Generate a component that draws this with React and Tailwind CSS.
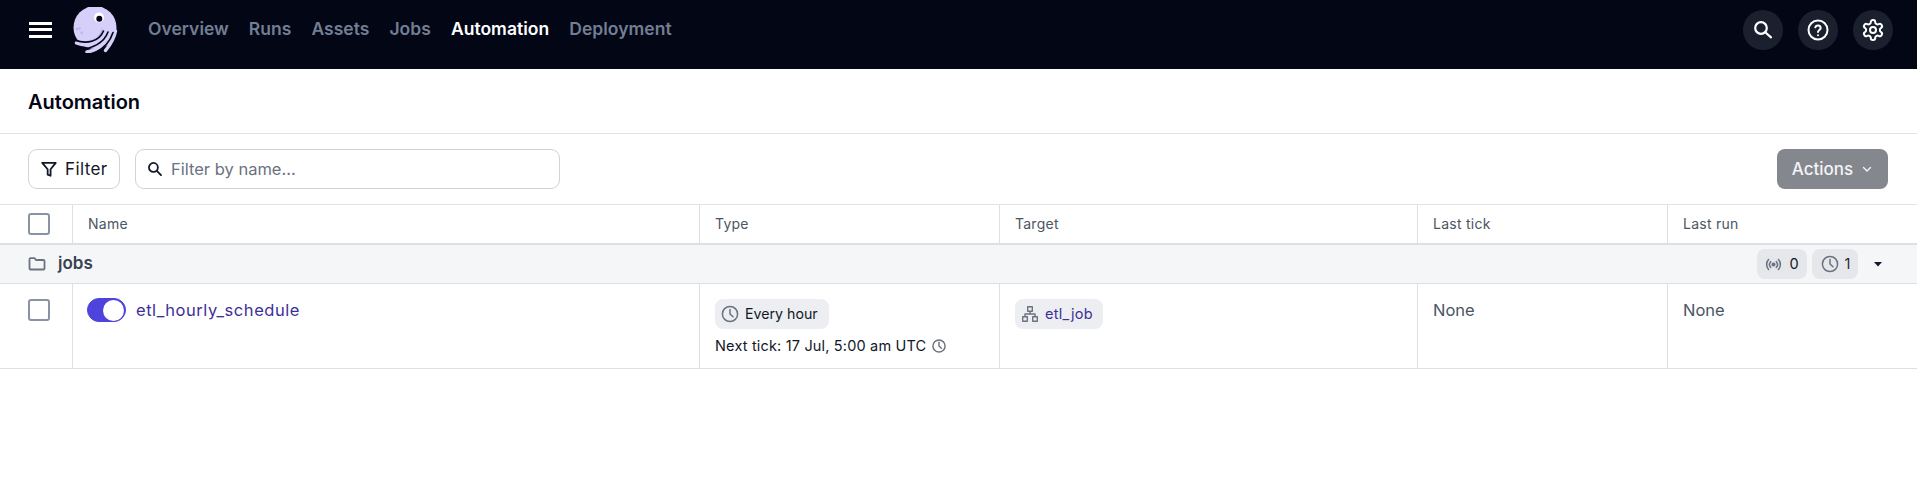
import React from "react";

const font = { fontFamily: "Inter, 'Liberation Sans', sans-serif" };

function Clock({ size = 20, color = "#6b7280", sw = 1.5 }) {
  return (
    <svg width={size} height={size} viewBox="0 0 20 20" fill="none" stroke={color} strokeWidth={sw} strokeLinecap="round" strokeLinejoin="round" className="shrink-0">
      <circle cx="10" cy="10" r="7.6" />
      <path d="M10 5.4V10l3 2.8" />
    </svg>
  );
}

function Checkbox() {
  return <div className="w-[22px] h-[22px] rounded-[3px] border-[2.5px] border-[#8a93a3] bg-white" />;
}

function Logo() {
  return (
    <svg width="46" height="46" viewBox="0 0 46 46" fill="none">
      <circle cx="23" cy="20.500" r="21.500" fill="#d6cffa" />
      <path d="M15 34C23 33 29 28 30 20C32 26 30 31 25 34C21 36 18 36 15 34Z" fill="#b9b0ef" />
      <path d="M4.500 36C14 40 26 38 33 28" stroke="#d6cffa" strokeWidth="3.500" strokeLinecap="round" />
      <path d="M15 45C24 43.500 34 38 38.500 27" stroke="#d6cffa" strokeWidth="3.500" strokeLinecap="round" />
      <path d="M33.500 43.500C38 38 42 32 43.500 24" stroke="#d6cffa" strokeWidth="3.500" strokeLinecap="round" />
      <path d="M3 33C14 37.500 27 35 31.500 24" stroke="#030615" strokeWidth="1.600" strokeLinecap="round" />
      <path d="M8 42C20 42 32 36 36 25" stroke="#030615" strokeWidth="1.600" strokeLinecap="round" />
      <path d="M22 46.500C30 42.500 38 35 41 25.500" stroke="#030615" strokeWidth="1.600" strokeLinecap="round" />
      <circle cx="27" cy="10.500" r="5" fill="#fff" />
      <circle cx="27.300" cy="11.800" r="3" fill="#030615" />
      <circle cx="5" cy="22" r="1.200" fill="#bdb4ef" />
      <circle cx="7.500" cy="21.500" r="1.200" fill="#bdb4ef" />
      <circle cx="9.700" cy="25.700" r="1.300" fill="#bdb4ef" />
    </svg>
  );
}

function NavButton({ children }) {
  return <div className="w-10 h-10 rounded-full bg-[#1a202e] flex items-center justify-center">{children}</div>;
}

function HeadCell({ children, first }) {
  return (
    <div className={`h-full flex items-center pb-[1px] text-[14px] tracking-[0.25px] text-[#4b5563] pl-[15px] ${first ? "" : "border-l border-[#dcdfe6]"}`}>
      {children}
    </div>
  );
}

export default function App() {
  const gridCols = "grid grid-cols-[72px_627px_300px_418px_250px_250px]";
  return (
    <div className="w-[1917px] h-[490px] bg-white overflow-hidden" style={font}>
      <header className="h-[69px] bg-[#030615] flex items-center pl-[29px] pr-[24px] pb-[10px]">
        <div className="w-[23px] flex flex-col gap-[3.5px]">
          <div className="h-[3px] bg-white" />
          <div className="h-[3px] bg-white" />
          <div className="h-[3px] bg-white" />
        </div>
        <div className="ml-[20px] mt-[1px]"><Logo /></div>
        <nav className="ml-[30px] flex items-center gap-[20px] text-[17.500px] font-semibold tracking-[0.03px] text-[#727e93]">
          <span>Overview</span>
          <span>Runs</span>
          <span>Assets</span>
          <span>Jobs</span>
          <span className="text-white">Automation</span>
          <span>Deployment</span>
        </nav>
        <div className="ml-auto flex items-center gap-[15px]">
          <NavButton>
            <svg width="24" height="24" viewBox="0 0 24 24" fill="none" stroke="#fff" strokeWidth="2.200" strokeLinecap="round"><circle cx="10" cy="10" r="5.800" /><path d="M14.500 14.500l5.500 4.800" /></svg>
          </NavButton>
          <NavButton>
            <svg width="24" height="24" viewBox="0 0 24 24" fill="none" stroke="#fff" strokeWidth="2" strokeLinecap="round" strokeLinejoin="round"><circle cx="12" cy="12" r="9.500" /><path d="M9.300 9.300a2.800 2.800 0 0 1 5.400.7c0 1.800-2.700 2.300-2.700 4" /><path d="M12 17.200v.1" /></svg>
          </NavButton>
          <NavButton>
            <svg width="24" height="24" viewBox="0 0 24 24" fill="none" stroke="#fff" strokeWidth="2" strokeLinecap="round" strokeLinejoin="round"><path d="M12.220 2h-.44a2 2 0 0 0-2 2v.18a2 2 0 0 1-1 1.730l-.43.25a2 2 0 0 1-2 0l-.15-.08a2 2 0 0 0-2.730.73l-.22.380a2 2 0 0 0 .73 2.730l.15.100a2 2 0 0 1 1 1.720v.510a2 2 0 0 1-1 1.740l-.15.090a2 2 0 0 0-.73 2.730l.22.380a2 2 0 0 0 2.730.73l.15-.08a2 2 0 0 1 2 0l.43.250a2 2 0 0 1 1 1.730V20a2 2 0 0 0 2 2h.44a2 2 0 0 0 2-2v-.18a2 2 0 0 1 1-1.730l.43-.25a2 2 0 0 1 2 0l.15.080a2 2 0 0 0 2.730-.73l.22-.390a2 2 0 0 0-.73-2.730l-.15-.080a2 2 0 0 1-1-1.740v-.500a2 2 0 0 1 1-1.740l.15-.090a2 2 0 0 0 .73-2.730l-.22-.380a2 2 0 0 0-2.730-.73l-.15.080a2 2 0 0 1-2 0l-.43-.250a2 2 0 0 1-1-1.730V4a2 2 0 0 0-2-2z" /><circle cx="12" cy="12" r="3" /></svg>
          </NavButton>
        </div>
      </header>

      <div className="h-[65px] flex items-center pl-[28px] pt-[2px] border-b border-[#e1e3e8] text-[20px] font-semibold text-[#030615]">
        Automation
      </div>

      <div className="h-[71px] flex items-center pl-[28px] pr-[29px] border-b border-[#e1e3e8]">
        <button className="h-[40px] w-[92px] rounded-[9px] border border-[#cfd3da] flex items-center pl-[11px] gap-[7px] text-[17px] tracking-[0.4px] text-[#111827]">
          <svg width="18" height="18" viewBox="0 0 16 16" fill="none" stroke="#111827" strokeWidth="1.600" strokeLinejoin="round"><path d="M2 2.500h12L9.400 8.200V14L6.800 13V8.200z" /></svg>
          <span className="mt-[1px]">Filter</span>
        </button>
        <div className="ml-[15px] h-[40px] w-[425px] rounded-[9px] border border-[#cfd3da] flex items-center pl-[10px] gap-[7px]">
          <svg width="18" height="18" viewBox="0 0 17 17" fill="none" stroke="#111827" strokeWidth="1.700" strokeLinecap="round"><circle cx="7" cy="7" r="4.200" /><path d="M10.200 10.200l4 4" /></svg>
          <span className="text-[16.500px] text-[#6b7280]">Filter by name…</span>
        </div>
        <button className="ml-auto h-[40px] w-[111px] rounded-[8px] bg-[#85878e] flex items-center justify-center gap-[8px] text-[17px] font-medium text-[#f3f4f6]">
          <span className="mt-[1px]">Actions</span>
          <svg width="12" height="12" viewBox="0 0 12 12" fill="none" stroke="#f3f4f6" strokeWidth="1.400" strokeLinecap="round" strokeLinejoin="round"><path d="M2.500 4.500 6 8l3.500-3.500" /></svg>
        </button>
      </div>

      <div className={`${gridCols} h-[40px] border-b-[2px] border-[#dcdfe6] items-center`}>
        <div className="h-full flex items-center pl-[28px]"><Checkbox /></div>
        <HeadCell>Name</HeadCell>
        <HeadCell>Type</HeadCell>
        <HeadCell>Target</HeadCell>
        <HeadCell>Last tick</HeadCell>
        <HeadCell>Last run</HeadCell>
      </div>

      <div className="h-[39px] bg-[#f5f6f8] border-b border-[#dcdfe6] flex items-center pl-[28px] pr-[33px]">
        <svg width="18" height="18" viewBox="0 0 18 18" fill="none" stroke="#6b7280" strokeWidth="1.800" strokeLinejoin="round"><path d="M1.500 4.300c0-.6.500-1.100 1.100-1.100h3.900l1.500 1.800h7.400c.6 0 1.100.5 1.100 1.100v7.300c0 .6-.5 1.100-1.100 1.100H2.600c-.6 0-1.100-.5-1.100-1.100z" /></svg>
        <span className="ml-[12px] text-[17px] font-semibold text-[#374151]">jobs</span>
        <div className="ml-auto flex items-center gap-[5px]">
          <div className="h-[30px] w-[50px] rounded-[8px] bg-[#e6e7eb] flex items-center justify-center gap-[7px]">
            <svg width="17" height="17" viewBox="0 0 24 24" fill="none" stroke="#6b7280" strokeWidth="2.200" strokeLinecap="round"><circle cx="12" cy="12" r="1.800" fill="#6b7280" /><path d="M8 16a6 6 0 0 1 0-8M16 8a6 6 0 0 1 0 8M5 19a10.500 10.500 0 0 1 0-14M19 5a10.500 10.500 0 0 1 0 14" /></svg>
            <span className="text-[14.500px] text-[#111827]">0</span>
          </div>
          <div className="h-[30px] w-[46px] rounded-[8px] bg-[#e6e7eb] flex items-center justify-center gap-[5px]">
            <Clock size={20} />
            <span className="text-[14.500px] text-[#1f2937]">1</span>
          </div>
          <svg className="ml-[9px]" width="12" height="12" viewBox="0 0 12 12"><path d="M2 4h8L6 8.500z" fill="#111827" /></svg>
        </div>
      </div>

      <div className={`${gridCols} h-[85px] border-b border-[#dcdfe6]`}>
        <div className="pl-[28px] pt-[15px]"><Checkbox /></div>
        <div className="border-l border-[#dcdfe6] pl-[14px] pt-[14px] flex items-start gap-[10px]">
          <div className="w-[39px] h-[24px] rounded-full bg-[#4f43dd] border border-[#4f43dd] flex items-center justify-end pr-[1px]">
            <div className="w-[21px] h-[21px] rounded-full bg-white" />
          </div>
          <span className="mt-[1px] text-[16.500px] tracking-[0.55px] leading-[22px] text-[#3d2f99]">etl_hourly_schedule</span>
        </div>
        <div className="border-l border-[#dcdfe6] pl-[15px] pt-[15px]">
          <div className="inline-flex h-[30px] items-center gap-[5px] rounded-[8px] bg-[#eceef1] pl-[5px] pr-[11px] text-[14.200px] text-[#111827]">
            <Clock size={20} />
            <span>Every hour</span>
          </div>
          <div className="mt-[6px] flex items-center gap-[5px] text-[14.500px] tracking-[0.17px] leading-[20px] text-[#111827]">
            <span>Next tick: 17 Jul, 5:00 am UTC</span>
            <Clock size={16} sw={1.800} />
          </div>
        </div>
        <div className="border-l border-[#dcdfe6] pl-[15px] pt-[15px]">
          <div className="inline-flex h-[30px] items-center gap-[6px] rounded-[8px] bg-[#eceef1] pl-[6px] pr-[10px] text-[14.500px] tracking-[0.3px] text-[#3d2f99]">
            <svg width="18" height="18" viewBox="0 0 18 18" fill="none" stroke="#6b7280" strokeWidth="1.400" strokeLinejoin="round"><rect x="6.700" y="1.700" width="4.600" height="4.600" /><rect x="1.700" y="11.700" width="4.600" height="4.600" /><rect x="11.700" y="11.700" width="4.600" height="4.600" /><path d="M9 6.300V9M4 11.700V9h10v2.700" /></svg>
            <span>etl_job</span>
          </div>
        </div>
        <div className="border-l border-[#dcdfe6] pl-[15px] pt-[15px] text-[16.500px] leading-[22px] text-[#4b5563]">None</div>
        <div className="border-l border-[#dcdfe6] pl-[15px] pt-[15px] text-[16.500px] leading-[22px] text-[#4b5563]">None</div>
      </div>
    </div>
  );
}
